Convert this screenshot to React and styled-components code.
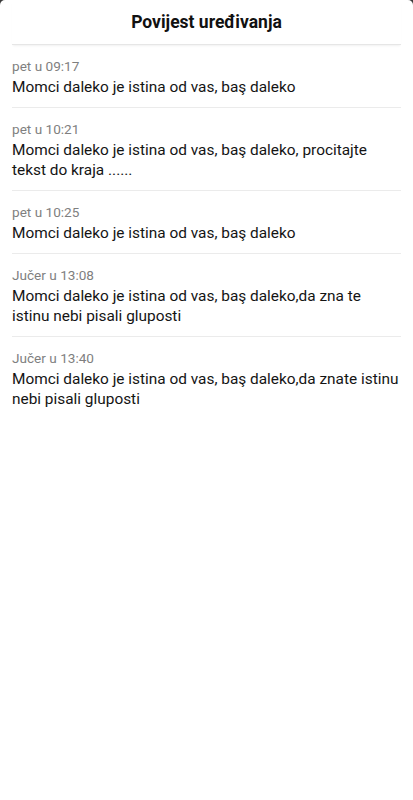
import React from 'react'
import styled, { createGlobalStyle } from 'styled-components'

const GlobalStyle = createGlobalStyle`
  html, body {
    margin: 0;
    padding: 0;
    background: #3a3a3a;
  }
  body {
    font-family: Roboto, "Noto Sans", sans-serif;
  }
`

const Sheet = styled.div`
  display: flex;
  flex-direction: column;
  width: 413px;
  min-height: 800px;
  background: #ffffff;
  border-radius: 5px 5px 0 0;
`

const Header = styled.div`
  display: flex;
  justify-content: center;
  align-items: center;
  height: 44px;
  margin: 0 12px;
  border-bottom: 1px solid #e6e6e6;
  box-shadow: 0 2px 2px -1px rgba(0, 0, 0, 0.06);
  font-size: 17.5px;
  font-weight: 700;
  color: #111111;
`

const List = styled.div`
  display: flex;
  flex-direction: column;
  padding: 0 12px;
`

const Entry = styled.div`
  display: flex;
  flex-direction: column;
  gap: 2px;
  padding: 12px 0 10px 0;
  border-bottom: ${p => (p.last ? 'none' : '1px solid #ebebeb')};
`

const EntryDate = styled.div`
  font-size: 13.6px;
  line-height: 18px;
  color: #7f7f7f;
`

const EntryText = styled.div`
  font-size: 15.4px;
  line-height: 20px;
  color: #141414;
`

const edits = [
  { date: 'pet u 09:17', text: 'Momci daleko je istina od vas, baş daleko' },
  { date: 'pet u 10:21', text: 'Momci daleko je istina od vas, baş daleko, procitajte tekst do kraja ......' },
  { date: 'pet u 10:25', text: 'Momci daleko je istina od vas, baş daleko' },
  { date: 'Jučer u 13:08', text: 'Momci daleko je istina od vas, baş daleko,da zna te istinu nebi pisali gluposti' },
  { date: 'Jučer u 13:40', text: 'Momci daleko je istina od vas, baş daleko,da znate istinu nebi pisali gluposti' },
]

const App = () => {
  return (
    <Sheet>
      <GlobalStyle />
      <Header>Povijest uređivanja</Header>
      <List>
        {edits.map((edit, i) => (
          <Entry key={i} last={i === edits.length - 1}>
            <EntryDate>{edit.date}</EntryDate>
            <EntryText>{edit.text}</EntryText>
          </Entry>
        ))}
      </List>
    </Sheet>
  )
}

export default App
